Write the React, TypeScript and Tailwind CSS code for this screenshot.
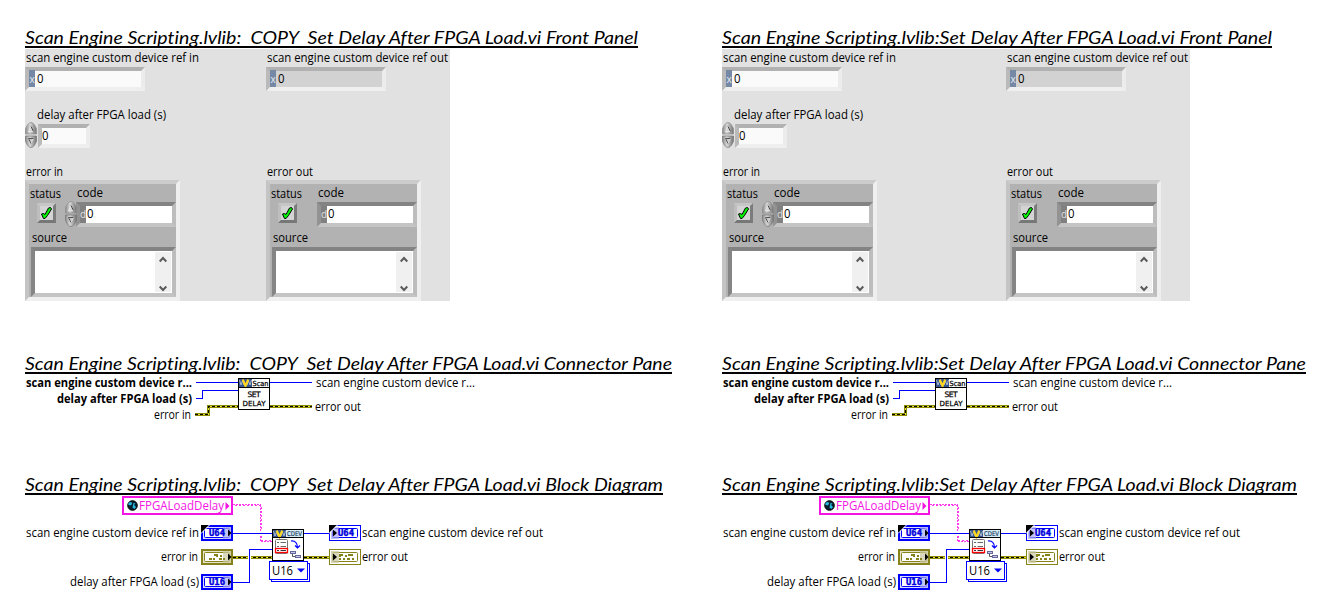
import React, { useLayoutEffect, useRef } from "react";

const SANS = "font-['Open_Sans','Noto_Sans',sans-serif]";

/* One line of text condensed or stretched to a given width. */
function Fit({ text, w, className = "" }: { text: string; w: number; className?: string }) {
  const ref = useRef<HTMLSpanElement>(null);
  useLayoutEffect(() => {
    const el = ref.current;
    if (!el) return;
    el.style.transform = "none";
    const natural = el.getBoundingClientRect().width;
    el.style.transform = `scaleX(${w / natural})`;
  }, [text, w]);
  return (
    <span className={`block whitespace-pre ${className}`} style={{ width: w }}>
      <span ref={ref} className="inline-block origin-left">
        {text}
      </span>
    </span>
  );
}

function Label({ text, w, className = "" }: { text: string; w: number; className?: string }) {
  return <Fit text={text} w={w} className={`h-4 text-[12px] leading-4 ${className}`} />;
}

function Heading({ text, w }: { text: string; w: number }) {
  return (
    <h2 className="h-[24px] shrink-0 overflow-hidden border-b-2 border-black" style={{ width: w }}>
      <Fit
        text={text}
        w={w}
        className="h-[24px] font-['Lato',sans-serif] text-[17.5px] leading-[28px] italic [font-variant-ligatures:none]"
      />
    </h2>
  );
}

function Spinner() {
  return (
    <svg width="12" height="26" viewBox="0 0 12 26" className="shrink-0">
      <defs>
        <linearGradient id="knob" x1="0" x2="1" y1="0" y2="0">
          <stop offset="0" stopColor="#8c8c8c" />
          <stop offset="0.4" stopColor="#d6d6d6" />
          <stop offset="1" stopColor="#747474" />
        </linearGradient>
      </defs>
      <path d="M0.5 12 V7 C1.500 4 3.500 0.500 6 0.500 S10.500 4 11.500 7 V12 Z" fill="url(#knob)" stroke="#8d8d8d" strokeWidth="0.7" />
      <path d="M0.5 14 V19 C1.500 22 3.500 25.500 6 25.500 S10.500 22 11.500 19 V14 Z" fill="url(#knob)" stroke="#777" strokeWidth="0.7" />
      <path d="M3.500 9.500 L6 4.500 L8.500 9.500 Z" fill="#d2d2d2" stroke="#f5f5f5" strokeWidth="0.6" />
      <path d="M6 4.500 L8.500 9.500" stroke="#444" />
      <path d="M3.500 16.500 H8.500 L6 21.500 Z" fill="#c8c8c8" stroke="#eee" strokeWidth="0.6" />
      <path d="M8.500 16.500 H3.500 L6 21.500" fill="none" stroke="#555" />
    </svg>
  );
}

function RefField({ readOnly = false }: { readOnly?: boolean }) {
  return (
    <div
      className={`mt-px flex h-6 w-[120px] border-4 border-t-[#b1b1b1] border-r-[#ececec] border-b-[#efefef] border-l-[#bababa] ${
        readOnly ? "bg-[#d2d2d2]" : "bg-[#fafafa]"
      }`}
    >
      <div className="-mt-px h-[17px] w-1.5 bg-[#7588a5] text-center text-[10px] leading-[18px] text-[#e6eaf0]">x</div>
      <Label text="0" w={6.5} className="ml-0.5" />
    </div>
  );
}

function Cluster({ spinner = false }: { spinner?: boolean }) {
  return (
    <div className="flex h-[121px] w-[155px] flex-col border-4 border-t-[#cccccc] border-r-[#efefef] border-b-[#f0f0f0] border-l-[#c4c4c4] bg-[#b2b2b2]">
      <div className="flex h-[43px]">
        <div className="w-9 pt-0.5 pl-px">
          <Label text="status" w={31} />
          <div className="mt-px ml-[7px] flex h-5 w-[19px] items-center justify-center border-[3px] border-t-[#c6c6c6] border-r-[#7c7c7c] border-b-[#777777] border-l-[#bebebe] bg-[#d4d4d4]">
            <svg width="13" height="14" viewBox="0 0 13 14" className="shrink-0">
              <path
                d="M1.500 8 L3.500 7.500 L5 8.500 L8.500 2 L10.500 1.500 L11.500 3 L7.500 9.500 L5 12.500 L3.500 12.500 Z"
                fill="#00f500"
                stroke="#000"
                strokeWidth="1"
              />
            </svg>
          </div>
        </div>
        <div className="w-[111px] pt-px">
          <Label text="code" w={26} className="ml-3" />
          <div className="flex">
            <div className="z-10 h-[26px] w-[11px] shrink-0">{spinner && <Spinner />}</div>
            <div className="mt-px flex h-[25px] w-[100px] border-4 border-t-[#838383] border-r-[#bdbdbd] border-b-[#c4c4c4] border-l-[#939393] bg-white">
              <div className="w-1.5 bg-[#808080] text-center text-[10px] leading-[17px] text-[#e1e1e1]">d</div>
              <Label text="0" w={6.5} className="ml-px" />
            </div>
          </div>
        </div>
      </div>
      <div className="pt-[3px] pl-0.5">
        <Label text="source" w={35} className="ml-px" />
        <div className="mt-px flex h-[50px] w-[145px] justify-end border-4 border-t-[#838383] border-r-[#bdbdbd] border-b-[#c4c4c4] border-l-[#858585] bg-white pt-px pr-px pb-px">
          <div className="flex w-4 flex-col items-center justify-between bg-[#f0f0f0] pt-1">
            <svg width="8" height="7" viewBox="0 0 8 7">
              <path d="M0.7 5.500 L4 2 L7.300 5.500" fill="none" stroke="#5a5a5a" strokeWidth="2" />
            </svg>
            <svg width="8" height="7" viewBox="0 0 8 7">
              <path d="M0.7 1.500 L4 5 L7.300 1.500" fill="none" stroke="#5a5a5a" strokeWidth="2" />
            </svg>
          </div>
        </div>
      </div>
    </div>
  );
}

function FrontPanel({ wide = false }: { wide?: boolean }) {
  return (
    <div className={`mt-px flex h-[252px] bg-[#e1e1e1] pt-px ${wide ? "w-[468px]" : "w-[425px]"}`}>
      <div className={`shrink-0 ${wide ? "w-[284px]" : "w-[241px]"}`}>
        <Label text="scan engine custom device ref in" w={173} className="ml-px" />
        <RefField />
        <Label text="delay after FPGA load (s)" w={129} className="mt-4 ml-3" />
        <div className="-mt-px flex items-end">
          <Spinner />
          <div className="ml-px flex h-6 w-[52px] border-4 border-t-[#b1b1b1] border-r-[#ececec] border-b-[#efefef] border-l-[#bababa] bg-[#fafafa]">
            <Label text="0" w={6.5} />
          </div>
        </div>
        <Label text="error in" w={37} className="mt-4 ml-px" />
        <Cluster spinner />
      </div>
      <div className="shrink-0">
        <Label text="scan engine custom device ref out" w={181} className="ml-px" />
        <RefField readOnly />
        <Label text="error out" w={46} className="mt-[73px] ml-px" />
        <Cluster />
      </div>
    </div>
  );
}

/* Blue banner with the yellow V. */
function Banner() {
  return (
    <g>
      <rect x="1" y="1" width="13" height="8" fill="#34568c" />
      <path d="M1.500 2 L3 7 L4.500 3 L6 7 M9 7 L10.500 3 L12 7 L13.500 2" fill="none" stroke="#a9b8d2" strokeWidth="1" />
      <path d="M4.700 1.500 L7.500 8 L10.300 1.500" fill="none" stroke="#ffd61f" strokeWidth="2.200" />
    </g>
  );
}

function ErrorWire({ d }: { d: string }) {
  return (
    <g fill="none">
      <path d={d} stroke="#8c8a00" strokeWidth="3" />
      <path d={d} stroke="#e8e23c" strokeWidth="1" />
      <path d={d} stroke="#000" strokeWidth="1" strokeDasharray="3 2" />
    </g>
  );
}

function ConnectorPane() {
  return (
    <div className="relative h-[56px] w-[600px]">
      <svg width="300" height="56" viewBox="0 0 300 56" className="absolute top-0 left-0" shapeRendering="crispEdges">
        <path d="M171 8.500 H213 M171 24.500 H177.500 V16.500 H213 M245 8.500 H287" fill="none" stroke="#0000ff" />
        <ErrorWire d="M170 40.500 H183.500 V32.500 H213" />
        <ErrorWire d="M245 32.500 H287" />
      </svg>
      <Label text="scan engine custom device r..." w={166} className="absolute top-px left-px font-bold" />
      <Label text="delay after FPGA load (s)" w={135} className="absolute top-[17px] left-[32px] font-bold" />
      <Label text="error in" w={37} className="absolute top-[33px] left-[129px]" />
      <Label text="scan engine custom device r..." w={159} className="absolute top-px left-[291px]" />
      <Label text="error out" w={46} className="absolute top-[25px] left-[290px]" />
      <svg width="32" height="32" viewBox="0 0 32 32" className="absolute top-1 left-[213px] overflow-visible">
        <rect x="0.5" y="0.5" width="31" height="31" fill="#fff" stroke="#000" />
        <Banner />
        <path d="M0 9.500 H32" stroke="#000" />
        <g fontFamily="DejaVu Sans" fontSize="7.500" stroke="#000" strokeWidth="0.25">
          <text x="14.500" y="8" fontSize="7" textLength="16" lengthAdjust="spacingAndGlyphs">Scan</text>
          <text x="9.500" y="19" textLength="13" fontSize="7.500" lengthAdjust="spacing">SET</text>
          <text x="4.500" y="28" textLength="23" fontSize="7" lengthAdjust="spacing">DELAY</text>
        </g>
      </svg>
    </div>
  );
}

function Terminal({
  kind,
  out = false,
  corner = false,
  className,
}: {
  kind: "U64" | "U16" | "error";
  out?: boolean;
  corner?: boolean;
  className: string;
}) {
  const err = kind === "error";
  const color = err ? "#86831a" : "#0000ff";
  const pale = err ? "#c9c8a0" : "#a8a8f4";
  const bw = out ? 1 : 2;
  return (
    <svg width="32" height="16" viewBox="0 0 32 16" className={`absolute ${className}`}>
      <rect x={bw / 2} y={bw / 2} width={32 - bw} height={16 - bw} fill={out ? "#fff" : err ? "#e6e5cc" : "#dcdcff"} stroke={color} strokeWidth={bw} />
      <rect x="3.500" y="3.500" width="25" height="9" rx="1" fill="#fff" stroke={color} />
      <rect x={out ? 2 : 22} y="2" width="8" height="12" fill={pale} fillOpacity="0.7" />
      {err ? (
        <path
          d={
            out
              ? "M10 6 H14 M16 7 H18 M19 6 H24 M10 10 H12 M14 10 H16 M18 10 H21 M23 10 H25 M11 5 V8"
              : "M8 10 H11 M12 10 H14 M13 6 H17 M16 5 V8 M18 10 H21 M19 7 H21 M22 10 H24"
          }
          fill="none"
          stroke={color}
          strokeWidth="2"
          shapeRendering="crispEdges"
        />
      ) : (
        <text x={out ? 9 : 8} y="11" fontSize="8" fontWeight="bold" fontFamily="DejaVu Sans Mono" fill="#0000dd" stroke="#0000dd" strokeWidth="0.4" textLength="16" lengthAdjust="spacingAndGlyphs">
          {kind}
        </text>
      )}
      <path d={out ? "M4 4.500 V11.500 L8 8 Z" : "M27 4.500 V11.500 L30.500 8 Z"} fill="#000" />
      {corner && <path d="M0 0 H8 L0 8 Z" fill="#000" />}
      {corner && <path d="M8.500 0 L0 8.500" stroke="#fff" />}
    </svg>
  );
}

function BlockDiagram() {
  return (
    <div className="relative h-[100px] w-[600px]">
      <svg width="320" height="100" viewBox="0 0 320 100" className="absolute top-0 left-0" shapeRendering="crispEdges">
        <path d="M208 38.500 H247 M279 38.500 H304" stroke="#0000ff" />
        <ErrorWire d="M208 62.500 H247" />
        <ErrorWire d="M279 62.500 H304" />
        <path d="M224.500 59 V66" stroke="#fff" strokeWidth="3" />
        <path d="M208 87.500 H224.500 V54.500 H247" fill="none" stroke="#0000ff" />
        <path d="M208 9.500 H236 M236 46.500 H247" stroke="#ff38ea" strokeDasharray="2 1" />
        <path d="M210 10.500 H236 M236 45.500 H247" stroke="#ff38ea" strokeDasharray="2 2" />
        <path d="M235.500 10 V36 M235.500 41 V47" stroke="#ff38ea" strokeDasharray="2 1" />
        <path d="M236.500 12 V36 M236.500 41 V47" stroke="#ff38ea" strokeDasharray="2 2" />
      </svg>

      <div className="absolute top-px left-[97px] flex h-[19px] w-[111px] items-center border-2 border-[#f414e4] bg-white pl-[3px]">
        <svg width="11" height="11" viewBox="0 0 11 11" className="shrink-0">
          <circle cx="5.500" cy="5.500" r="4.800" fill="#08202c" stroke="#000" />
          <path d="M2 2.500 L4.500 2 L5 4 L3.500 5.500 L1 4.500 Z M6.500 3 L8.500 3.500 L7 5 L9 7 L7.500 9 L5.500 7.500 Z M2 7 L4 8.500" fill="#28bce4" />
        </svg>
        <Label text="FPGALoadDelay" w={85} className="ml-px text-[#f414e4]" />
        <svg width="5" height="8" viewBox="0 0 5 8" className="ml-px shrink-0">
          <path d="M0.500 0 V8 L4.500 4 Z" fill="#f414e4" />
        </svg>
      </div>

      <Label text="scan engine custom device ref in" w={173} className="absolute top-[30px] left-px" />
      <Label text="error in" w={37} className="absolute top-[54px] left-[136px]" />
      <Label text="delay after FPGA load (s)" w={129} className="absolute top-[79px] left-[45px]" />
      <Terminal kind="U64" corner className="top-[30px] left-[176px]" />
      <Terminal kind="error" className="top-[54px] left-[176px]" />
      <Terminal kind="U16" className="top-[79px] left-[176px]" />

      <div className="absolute top-[68px] left-[246px] h-[19px] w-[39px] border border-[#0000ff] bg-white" />
      <div className="absolute top-[66px] left-[244px] flex h-[19px] w-[39px] items-center border border-[#0000ff] bg-white pl-0.5">
        <Label text="U16" w={21} />
        <svg width="8" height="5" viewBox="0 0 8 5" className="ml-1 shrink-0">
          <path d="M0 0.500 H8 L4 4.500 Z" fill="#0000ff" />
        </svg>
      </div>
      <svg width="32" height="32" viewBox="0 0 32 32" className="absolute top-[34px] left-[247px] overflow-visible">
        <rect x="0.5" y="0.5" width="31" height="31" fill="#fff" stroke="#000" />
        <rect x="1" y="1" width="30" height="7" fill="#d7ebf5" />
        <Banner />
        <path d="M0 8.500 H32" stroke="#000" />
        <text x="15" y="7.300" fontSize="6.500" fontFamily="DejaVu Sans" fill="#173f63" stroke="#173f63" strokeWidth="0.2" textLength="15" lengthAdjust="spacingAndGlyphs">CDEV</text>
        <rect x="3.500" y="10.500" width="12" height="14" rx="1" fill="#fff" stroke="#777" />
        <path d="M5 13.500 H7 M8.500 13.500 H14 M5 17.500 H7 M8.500 17.500 H14" stroke="#666" />
        <rect x="3.500" y="19.500" width="12" height="4" fill="#fff" stroke="#ff0000" strokeWidth="1.300" />
        <path d="M5 21.500 H7 M8.500 21.500 H14" stroke="#333" />
        <path d="M19 12 C23 11.500 25.500 14 25.500 18.500 M23 16.500 L25.500 19 L28 16.500" fill="none" stroke="#0000ff" strokeWidth="1.200" />
        <path d="M20.500 25 V27.500 H23" fill="none" stroke="#555" />
        <rect x="18.500" y="22.500" width="5" height="2" fill="#c8c8e8" stroke="#66669a" />
        <rect x="23.500" y="26.500" width="5" height="2" fill="#c8c8e8" stroke="#66669a" />
      </svg>

      <Terminal kind="U64" out corner className="top-[30px] left-[304px]" />
      <Terminal kind="error" out className="top-[54px] left-[304px]" />
      <Label text="scan engine custom device ref out" w={181} className="absolute top-[30px] left-[337px]" />
      <Label text="error out" w={46} className="absolute top-[54px] left-[337px]" />
    </div>
  );
}

function Report({ title, widths, wide = false }: { title: string; widths: [number, number, number]; wide?: boolean }) {
  return (
    <section className={`flex shrink-0 flex-col pt-6 ${wide ? "w-[609px]" : "w-[697px]"}`}>
      <Heading text={`${title} Front Panel`} w={widths[0]} />
      <FrontPanel wide={wide} />
      <div className="mt-[49px]">
        <Heading text={`${title} Connector Pane`} w={widths[1]} />
        <ConnectorPane />
      </div>
      <div className="mt-[41px]">
        <Heading text={`${title} Block Diagram`} w={widths[2]} />
        <BlockDiagram />
      </div>
    </section>
  );
}

export default function App() {
  return (
    <main className={`flex h-[615px] w-[1331px] overflow-hidden bg-white pl-[25px] text-black ${SANS}`}>
      <Report title="Scan Engine Scripting.lvlib:  COPY  Set Delay After FPGA Load.vi" widths={[613, 647, 638]} />
      <Report title="Scan Engine Scripting.lvlib:Set Delay After FPGA Load.vi" widths={[550, 584, 575]} wide />
    </main>
  );
}
